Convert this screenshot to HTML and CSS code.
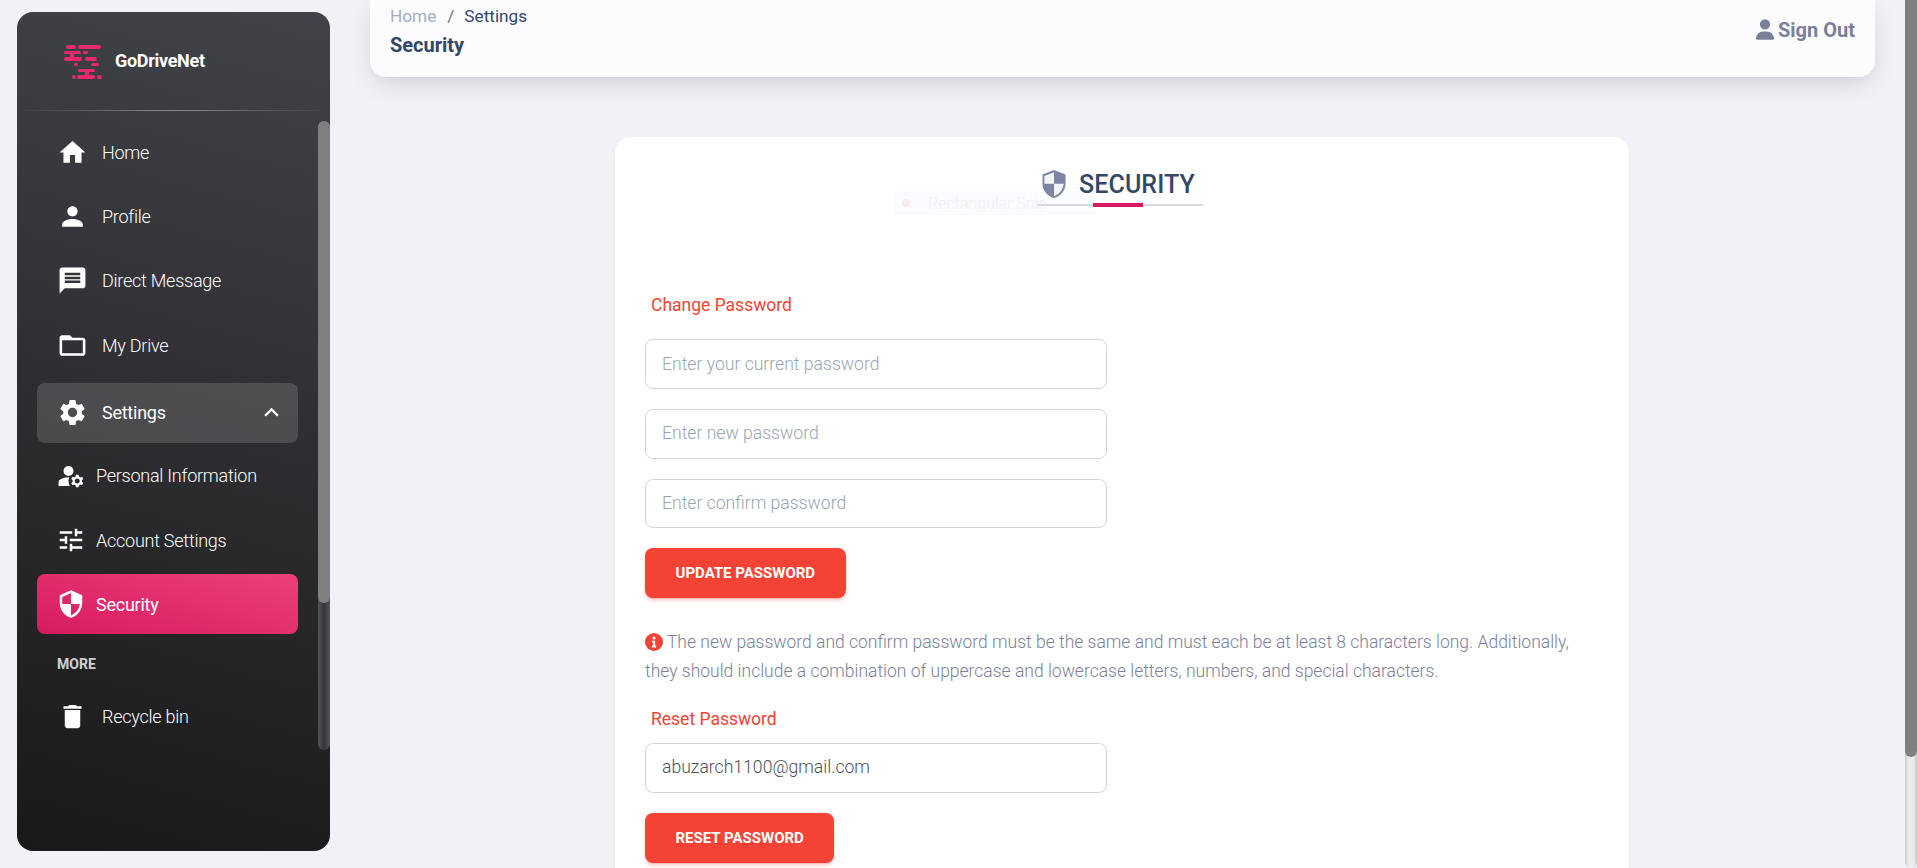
FILE: index.html
```html
<!DOCTYPE html>
<html lang="en">
<head>
  <meta charset="UTF-8">
  <title>Security</title>
  <link rel="stylesheet" href="styles.css">
</head>
<body>
  <aside class="sidebar">
    <div class="brand">
      <svg class="brand-logo" viewBox="0 0 44 40" fill="#e6286e">
        <rect x="3" y="0" width="10" height="4" rx="2"/><rect x="15" y="0" width="23" height="4" rx="2"/>
        <rect x="1" y="6" width="17" height="3" rx="1.5"/><rect x="7" y="6" width="4" height="8" /><rect x="20" y="6" width="5" height="3" rx="1.5"/>
        <rect x="1" y="12" width="18" height="4" rx="2"/><rect x="22" y="12" width="12" height="4" rx="2"/>
        <rect x="11" y="18" width="4" height="3" rx="1.5"/><rect x="28" y="18" width="8" height="3" rx="1.5"/>
        <rect x="15" y="24" width="17" height="3" rx="1.5"/><rect x="22" y="24" width="4" height="8"/>
        <rect x="9" y="30" width="4" height="4" rx="2"/><rect x="14" y="30" width="18" height="4" rx="2"/><rect x="34" y="30" width="5" height="4" rx="2"/>
      </svg>
      <span class="brand-name">GoDriveNet</span>
    </div>
    <div class="divider"></div>
    <nav class="nav">
      <a class="nav-item">
        <svg class="nav-icon" viewBox="0 0 24 24"><path d="M10 20v-6h4v6h5v-8h3L12 3 2 12h3v8z"/></svg>
        <span>Home</span>
      </a>
      <a class="nav-item">
        <svg class="nav-icon" viewBox="0 0 24 24"><path d="M12 12c2.21 0 4-1.79 4-4s-1.79-4-4-4-4 1.79-4 4 1.79 4 4 4zm0 2c-2.67 0-8 1.34-8 4v2h16v-2c0-2.66-5.33-4-8-4z"/></svg>
        <span>Profile</span>
      </a>
      <a class="nav-item">
        <svg class="nav-icon" viewBox="0 0 24 24"><path d="M20 2H4c-1.1 0-1.99.9-1.99 2L2 22l4-4h14c1.1 0 2-.9 2-2V4c0-1.1-.9-2-2-2zm-2 12H6v-2h12v2zm0-3H6V9h12v2zm0-3H6V6h12v2z"/></svg>
        <span>Direct Message</span>
      </a>
      <a class="nav-item">
        <svg class="nav-icon" viewBox="0 0 24 24"><path d="M20 6h-8l-2-2H4c-1.1 0-1.99.9-1.99 2L2 18c0 1.1.9 2 2 2h16c1.1 0 2-.9 2-2V8c0-1.1-.9-2-2-2zm0 12H4V8h16v10z"/></svg>
        <span>My Drive</span>
      </a>
      <a class="nav-item nav-open">
        <svg class="nav-icon" viewBox="0 0 24 24"><path d="M19.14 12.94c.04-.3.06-.61.06-.94 0-.32-.02-.64-.07-.94l2.03-1.58c.18-.14.23-.41.12-.61l-1.92-3.32c-.12-.22-.37-.29-.59-.22l-2.39.96c-.5-.38-1.03-.7-1.62-.94l-.36-2.54c-.04-.24-.24-.41-.48-.41h-3.84c-.24 0-.43.17-.47.41l-.36 2.54c-.59.24-1.13.57-1.62.94l-2.39-.96c-.22-.08-.47 0-.59.22L2.74 8.87c-.12.21-.08.47.12.61l2.03 1.58c-.05.3-.09.63-.09.94s.02.64.07.94l-2.03 1.58c-.18.14-.23.41-.12.61l1.92 3.32c.12.22.37.29.59.22l2.39-.96c.5.38 1.03.7 1.62.94l.36 2.54c.05.24.24.41.48.41h3.84c.24 0 .44-.17.47-.41l.36-2.54c.59-.24 1.13-.56 1.62-.94l2.39.96c.22.08.47 0 .59-.22l1.92-3.32c.12-.22.07-.47-.12-.61l-2.01-1.58zM12 15.6c-1.98 0-3.6-1.62-3.6-3.6s1.62-3.6 3.6-3.6 3.6 1.62 3.6 3.6-1.62 3.6-3.6 3.6z"/></svg>
        <span>Settings</span>
        <svg class="nav-chevron" viewBox="0 0 24 24"><path d="M12 8l-6 6 1.41 1.41L12 10.83l4.59 4.58L18 14z"/></svg>
      </a>
      <a class="nav-item nav-sub">
        <svg class="nav-icon" viewBox="0 0 24 24"><circle cx="10" cy="8" r="4"/><path d="M10.67 13.02C10.45 13.01 10.23 13 10 13c-2.42 0-4.68.67-6.61 1.82C2.51 15.34 2 16.32 2 17.35V20h9.26C10.47 18.87 10 17.49 10 16c0-1.07.25-2.07.67-2.98z"/><path d="M20.75 16c0-.22-.03-.42-.06-.63l1.14-1.01-1-1.73-1.45.49c-.32-.27-.68-.48-1.08-.63L18 11h-2l-.3 1.49c-.4.15-.76.36-1.08.63l-1.45-.49-1 1.73 1.14 1.01c-.03.21-.06.41-.06.63s.03.42.06.63l-1.14 1.01 1 1.73 1.45-.49c.32.27.68.48 1.08.63L16 21h2l.3-1.49c.4-.15.76-.36 1.08-.63l1.45.49 1-1.73-1.14-1.01c.03-.21.06-.41.06-.63zM17 18c-1.1 0-2-.9-2-2s.9-2 2-2 2 .9 2 2-.9 2-2 2z"/></svg>
        <span>Personal Information</span>
      </a>
      <a class="nav-item nav-sub">
        <svg class="nav-icon" viewBox="0 0 24 24"><path d="M3 17v2h6v-2H3zM3 5v2h10V5H3zm10 16v-2h8v-2h-8v-2h-2v6h2zM7 9v2H3v2h4v2h2V9H7zm14 4v-2H11v2h10zm-6-4h2V7h4V5h-4V3h-2v6z"/></svg>
        <span>Account Settings</span>
      </a>
      <a class="nav-item nav-sub nav-active">
        <svg class="nav-icon" viewBox="0 0 24 24"><path d="M12 1L3 5v6c0 5.55 3.84 10.74 9 12 5.16-1.26 9-6.45 9-12V5l-9-4zm0 10.99h7c-.53 4.12-3.28 7.79-7 8.94V12H5V6.3l7-3.11v8.8z"/></svg>
        <span>Security</span>
      </a>
      <div class="nav-heading">MORE</div>
      <a class="nav-item">
        <svg class="nav-icon" viewBox="0 0 24 24"><path d="M6 19c0 1.1.9 2 2 2h8c1.1 0 2-.9 2-2V7H6v12zM19 4h-3.5l-1-1h-5l-1 1H5v2h14V4z"/></svg>
        <span>Recycle bin</span>
      </a>
    </nav>
    <div class="scroll-track sidebar-track"><div class="scroll-thumb sidebar-thumb"></div></div>
  </aside>

  <main class="main">
    <header class="topbar">
      <div>
        <div class="crumbs"><span class="crumb-home">Home</span><span class="crumb-sep">/</span><span>Settings</span></div>
        <div class="page-name">Security</div>
      </div>
      <a class="sign-out">
        <svg class="sign-out-icon" viewBox="0 0 448 512"><path d="M224 256a128 128 0 1 0 0-256 128 128 0 1 0 0 256zm-45.7 48C79.8 304 0 383.8 0 482.3 0 498.7 13.3 512 29.7 512h388.6c16.4 0 29.7-13.3 29.7-29.7C448 383.8 368.2 304 269.7 304h-91.4z"/></svg>
        Sign Out
      </a>
    </header>

    <section class="card">
      <div class="snip"><span class="snip-dot"></span>Rectangular Snip</div>
      <div class="card-title">
        <svg class="title-icon" viewBox="1.5 1 21 25.500"><path d="M12 1 1.500 5.200v8c0 6.300 4.500 11.800 10.500 13.300 6-1.500 10.500-7 10.500-13.300v-8z"/><path class="title-icon-light" d="M12 3 3.200 6.500v7.100H12zM12 13.600v11.200c4.800-1.500 8.300-6 8.800-11.200z"/></svg>
        <h2>SECURITY</h2>
        <span class="title-mark"></span>
      </div>

      <h3 class="form-label first-label">Change Password</h3>
      <input class="field first-field" type="password" placeholder="Enter your current password">
      <input class="field" type="password" placeholder="Enter new password">
      <input class="field field-short" type="password" placeholder="Enter confirm password">
      <button class="btn" type="button">Update Password</button>

      <p class="note">
        <svg class="note-icon" viewBox="0 0 20 20"><circle cx="10" cy="10" r="10"/><circle class="note-i" cx="10" cy="5.600" r="1.700"/><path class="note-i" d="M7.800 8.600h3.400v5.400h1.200v2H7.600v-2h1.300v-3.400H7.800z"/></svg>
        The new password and confirm password must be the same and must each be at least 8 characters long. Additionally, they should include a combination of uppercase and lowercase letters, numbers, and special characters.
      </p>

      <h3 class="form-label reset-label">Reset Password</h3>
      <input class="field email-field" type="email" value="abuzarch1100@gmail.com">
      <button class="btn" type="button">Reset Password</button>
    </section>
  </main>

  <div class="scroll-track page-track"><div class="scroll-thumb page-thumb"></div></div>
</body>
</html>
```

FILE: styles.css
```css
* { box-sizing: border-box; }
html, body { height: 100%; }
body {
  margin: 0;
  display: flex;
  height: 868px;
  overflow: hidden;
  background: #f0f2f7;
  font-family: Roboto, "Liberation Sans", sans-serif;
  color: #344767;
}

/* sidebar */
.sidebar {
  position: relative;
  flex: 0 0 313px;
  height: 839px;
  margin: 12px 0 0 17px;
  border-radius: 16px;
  overflow: hidden;
  background: linear-gradient(195deg, #42424a, #191919);
  color: #fff;
}
.brand { display: flex; align-items: flex-start; height: 98px; padding: 33px 0 0 46px; }
.brand-logo { width: 44px; height: 40px; flex: none; }
.brand-name { margin: 5px 0 0 8px; line-height: 21px; font-size: 18px; font-weight: 700; letter-spacing: -0.3px; }
.divider {
  height: 1px;
  background: linear-gradient(to right, rgba(255,255,255,0), rgba(255,255,255,.4), rgba(255,255,255,0));
}
.nav { padding: 9px 32px 0 20px; }
.nav-item {
  display: flex;
  align-items: center;
  height: 64.4px;
  padding-left: 20px;
  font-size: 18px;
  font-weight: 300;
  letter-spacing: -0.25px;
}
.nav-icon { width: 31px; height: 31px; flex: none; margin-right: 14px; fill: #fff; }
.nav-open {
  height: 60px;
  margin: 5px 0 1px;
  border-radius: 8px;
  background: rgba(199,199,199,.2);
  font-weight: 400;
}
.nav-chevron { width: 29px; height: 29px; margin-left: auto; margin-right: 12px; fill: #fff; }
.nav-sub { padding-left: 19px; }
.nav-sub .nav-icon { width: 30px; height: 30px; margin-right: 10px; }
.nav-active {
  height: 60px;
  margin-top: 2px;
  border-radius: 8px;
  background: linear-gradient(195deg, #ec407a, #d81b60);
  font-weight: 400;
}
.nav-heading {
  margin: 21px 0 0 20px;
  height: 19px;
  line-height: 19px;
  font-size: 14px;
  font-weight: 700;
  color: rgba(255,255,255,.8);
}
.nav-heading + .nav-item { margin-top: 10px; }

/* overlay scrollbars */
.scroll-track { position: absolute; width: 12px; }
.scroll-thumb { width: 100%; border-radius: 6px; background: #808080; }
.sidebar-track {
  top: 109px;
  right: 0;
  height: 629px;
  border-radius: 6px;
  background: linear-gradient(to right, #555558, #353537 50%, #555558);
}
.sidebar-thumb { height: 482px; }
.page-track {
  top: 0;
  right: 0;
  height: 868px;
  background: linear-gradient(to right, #c9c9c9, #ececec 30%, #ececec 70%, #c9c9c9);
  border-radius: 0 0 6px 6px;
}
.page-thumb { height: 757px; border-radius: 0 0 6px 6px; }

/* main column */
.main { flex: 1; min-width: 0; padding: 0 42px 0 40px; }
.topbar {
  display: flex;
  justify-content: space-between;
  height: 77px;
  padding: 4px 20px 0;
  border-radius: 0 0 16px 16px;
  background: #fcfcfe;
  box-shadow: 0 8px 26px -4px rgba(20,20,20,.15), 0 8px 9px -5px rgba(20,20,20,.03);
}
.crumbs { height: 24px; line-height: 24px; font-size: 17.200px; font-weight: 400; }
.crumb-home { color: #a3aebf; }
.crumb-sep { margin: 0 10px 0 11px; color: #6c757d; }
.page-name { margin-top: 5px; height: 24px; line-height: 24px; font-size: 20px; font-weight: 700; }
.sign-out {
  display: flex;
  align-items: center;
  gap: 4px;
  height: 52px;
  font-size: 20px;
  font-weight: 700;
  color: #7b809a;
}
.sign-out-icon { width: 18px; height: 21px; margin-top: -2px; fill: #7b809a; }

/* card */
.card {
  position: relative;
  width: 1014px;
  height: 800px;
  margin: 60px 0 0 245px;
  padding: 30px 30px 0;
  border-radius: 16px;
  background: #fff;
  box-shadow: 0 4px 6px -1px rgba(0,0,0,.05), 0 2px 4px -1px rgba(0,0,0,.03);
}
.snip {
  position: absolute;
  top: 54px;
  left: 279px;
  display: flex;
  align-items: center;
  width: 201px;
  height: 24px;
  font-size: 16px;
  font-weight: 300;
  color: #f1f2f4;
  background: #f9fbfe;
}
.snip-dot { width: 8px; height: 8px; margin: 0 18px 0 8px; border-radius: 50%; background: #f6efee; }
.card-title {
  position: relative;
  display: flex;
  align-items: flex-start;
  width: 166px;
  height: 39px;
  margin-left: 392px;
  padding-left: 5px;
  border-bottom: 2px solid #d9d9dd;
}
.card-title h2 { margin: 1px 0 0 13px; line-height: 34px; font-size: 25px; font-weight: 500; letter-spacing: 0.1px; }
.title-icon { width: 24px; height: 28px; margin-top: 3px; flex: none; fill: #7e84a3; }
.title-icon-light { fill: #f4f5f8; }
.title-mark {
  position: absolute;
  left: 56px;
  bottom: -3px;
  width: 50px;
  height: 4px;
  background: #d81b60;
}

/* form */
.form-label { margin: 0; padding-left: 6px; height: 24px; line-height: 24px; font-size: 17.500px; font-weight: 400; color: #f44335; }
.first-label { margin-top: 87px; }
.reset-label { margin-top: 21px; }
.field {
  display: block;
  width: 462px;
  height: 50px;
  margin-top: 20px;
  padding: 0 16px 2px;
  border: 1px solid #d2d6da;
  border-radius: 8px;
  outline: none;
  background: #fff;
  font-family: inherit;
  font-size: 17.600px;
  font-weight: 300;
  color: #495057;
}
.field::placeholder { color: #9aa5b1; opacity: 1; }
.first-field { margin-top: 22px; padding-bottom: 1px; }
.field-short { height: 49px; }
.email-field { margin-top: 12px; height: 49.500px; }
.btn {
  display: block;
  height: 50px;
  margin-top: 20px;
  padding: 0 30.500px;
  border: 0;
  border-radius: 8px;
  background: #f44335;
  color: #fff;
  font-family: inherit;
  font-size: 15px;
  font-weight: 700;
  text-transform: uppercase;
  box-shadow: 0 3px 3px 0 rgba(244,67,53,.15), 0 3px 1px -2px rgba(244,67,53,.2), 0 1px 5px 0 rgba(244,67,53,.15);
}
.note { margin: 30px 0 0; line-height: 29px; font-size: 17.500px; font-weight: 300; color: #7b809a; }
.note-icon { width: 18px; height: 18px; vertical-align: -3px; fill: #f44335; }
.note-i { fill: #fff; }
```
